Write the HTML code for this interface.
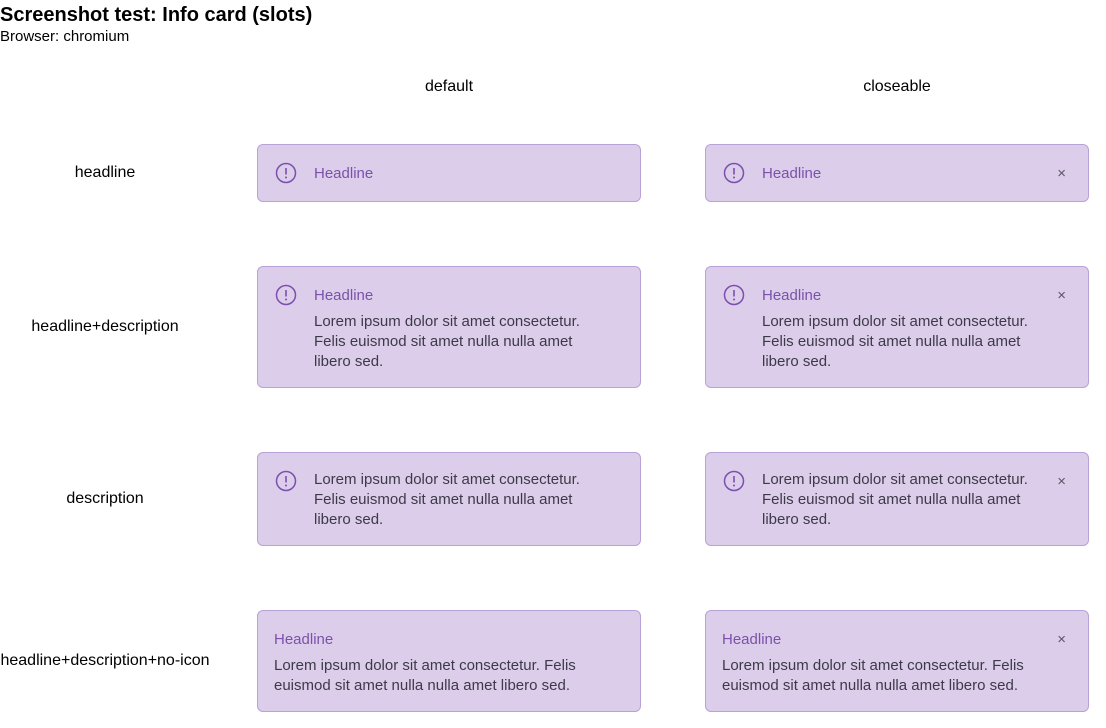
<!DOCTYPE html>
<html><head><style>
body{margin:0;width:1106px;height:728px;background:#fff;font-family:"Liberation Sans",sans-serif;position:relative;overflow:hidden}
.a{position:absolute}
h1{position:absolute;left:0;top:4px;margin:0;font-size:20px;font-weight:bold;color:#000}
.sub{left:0;top:28px;font-size:15px}
.ch{font-size:16px;width:300px;text-align:center;top:78px}
.rl{font-size:16px;width:210px;text-align:center;left:0}
.card{position:absolute;background:#dccdea;border:1px solid #b9a2d8;border-radius:6px;box-sizing:border-box;width:384px}
.ic{position:absolute;left:17px;width:22px;height:22px}
.hd{position:absolute;font-size:15px;color:#7a52aa}
.ds{position:absolute;font-size:15px;color:#3c3a48;line-height:20px}
.x{position:absolute;right:22px;font-size:15px;color:#5a5866}
</style></head><body>
<h1>Screenshot test: Info card (slots)</h1>
<div class="a sub">Browser: chromium</div>
<div class="a ch" style="left:299px">default</div>
<div class="a ch" style="left:747px">closeable</div>
<div class="a rl" style="top:164px">headline</div>
<div class="a rl" style="top:318px">headline+description</div>
<div class="a rl" style="top:490px">description</div>
<div class="a rl" style="top:652px">headline+description+no-icon</div>

<div class="card" style="left:257px;top:144px;height:58px">
<svg class="ic" style="top:17px" viewBox="0 0 22 22"><circle cx="11" cy="11" r="9.5" fill="none" stroke="#7b4fae" stroke-width="1.5"/><path d="M11 6v6.5" stroke="#7b4fae" stroke-width="1.6"/><circle cx="11" cy="15.5" r="1" fill="#7b4fae"/></svg>
<div class="hd" style="left:56px;top:20px">Headline</div></div>
<div class="card" style="left:705px;top:144px;height:58px">
<svg class="ic" style="top:17px" viewBox="0 0 22 22"><circle cx="11" cy="11" r="9.5" fill="none" stroke="#7b4fae" stroke-width="1.5"/><path d="M11 6v6.5" stroke="#7b4fae" stroke-width="1.6"/><circle cx="11" cy="15.5" r="1" fill="#7b4fae"/></svg>
<div class="hd" style="left:56px;top:20px">Headline</div><div class="x" style="top:20px">×</div></div>

<div class="card" style="left:257px;top:266px;height:122px">
<svg class="ic" style="top:17px" viewBox="0 0 22 22"><circle cx="11" cy="11" r="9.5" fill="none" stroke="#7b4fae" stroke-width="1.5"/><path d="M11 6v6.5" stroke="#7b4fae" stroke-width="1.6"/><circle cx="11" cy="15.5" r="1" fill="#7b4fae"/></svg>
<div class="hd" style="left:56px;top:20px">Headline</div>
<div class="ds" style="left:56px;top:45px;width:290px">Lorem ipsum dolor sit amet consectetur.<br>Felis euismod sit amet nulla nulla amet<br>libero sed.</div></div>
<div class="card" style="left:705px;top:266px;height:122px">
<svg class="ic" style="top:17px" viewBox="0 0 22 22"><circle cx="11" cy="11" r="9.5" fill="none" stroke="#7b4fae" stroke-width="1.5"/><path d="M11 6v6.5" stroke="#7b4fae" stroke-width="1.6"/><circle cx="11" cy="15.5" r="1" fill="#7b4fae"/></svg>
<div class="hd" style="left:56px;top:20px">Headline</div><div class="x" style="top:20px">×</div>
<div class="ds" style="left:56px;top:45px;width:290px">Lorem ipsum dolor sit amet consectetur.<br>Felis euismod sit amet nulla nulla amet<br>libero sed.</div></div>

<div class="card" style="left:257px;top:452px;height:94px">
<svg class="ic" style="top:17px" viewBox="0 0 22 22"><circle cx="11" cy="11" r="9.5" fill="none" stroke="#7b4fae" stroke-width="1.5"/><path d="M11 6v6.5" stroke="#7b4fae" stroke-width="1.6"/><circle cx="11" cy="15.5" r="1" fill="#7b4fae"/></svg>
<div class="ds" style="left:56px;top:17px;width:290px">Lorem ipsum dolor sit amet consectetur.<br>Felis euismod sit amet nulla nulla amet<br>libero sed.</div></div>
<div class="card" style="left:705px;top:452px;height:94px">
<svg class="ic" style="top:17px" viewBox="0 0 22 22"><circle cx="11" cy="11" r="9.5" fill="none" stroke="#7b4fae" stroke-width="1.5"/><path d="M11 6v6.5" stroke="#7b4fae" stroke-width="1.6"/><circle cx="11" cy="15.5" r="1" fill="#7b4fae"/></svg>
<div class="x" style="top:20px">×</div>
<div class="ds" style="left:56px;top:17px;width:290px">Lorem ipsum dolor sit amet consectetur.<br>Felis euismod sit amet nulla nulla amet<br>libero sed.</div></div>

<div class="card" style="left:257px;top:610px;height:102px">
<div class="hd" style="left:16px;top:20px">Headline</div>
<div class="ds" style="left:16px;top:45px;width:340px">Lorem ipsum dolor sit amet consectetur. Felis<br>euismod sit amet nulla nulla amet libero sed.</div></div>
<div class="card" style="left:705px;top:610px;height:102px">
<div class="hd" style="left:16px;top:20px">Headline</div><div class="x" style="top:20px">×</div>
<div class="ds" style="left:16px;top:45px;width:340px">Lorem ipsum dolor sit amet consectetur. Felis<br>euismod sit amet nulla nulla amet libero sed.</div></div>
</body></html>
